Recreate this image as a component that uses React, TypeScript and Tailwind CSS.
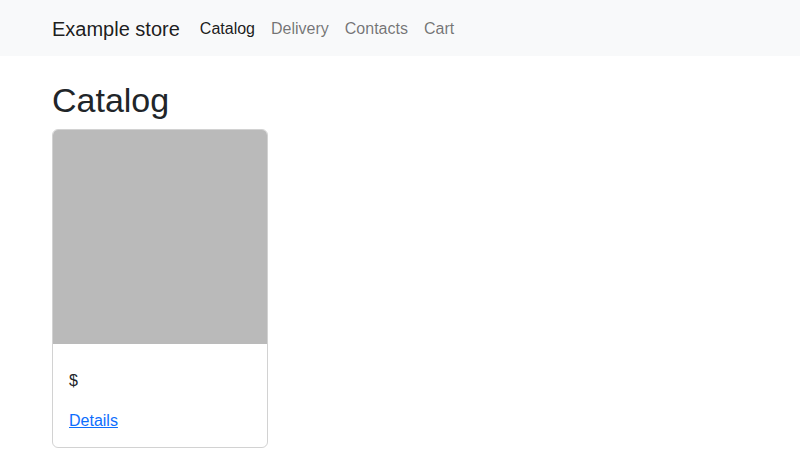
const navLinks = [
  { label: "Catalog", active: true },
  { label: "Delivery", active: false },
  { label: "Contacts", active: false },
  { label: "Cart", active: false },
];

export default function App() {
  return (
    <div className="min-h-screen bg-white font-['Liberation_Sans',Arial,sans-serif] text-[#212529]">
      <nav className="h-14 bg-[#f8f9fa]">
        <div className="mx-auto flex h-full w-[720px] items-center px-3 pt-[2px]">
          <a href="#" className="mr-3 text-[20px] leading-[30px] text-black/90">
            Example store
          </a>
          <ul className="flex">
            {navLinks.map((link) => (
              <li key={link.label}>
                <a
                  href="#"
                  className={
                    link.active
                      ? "block px-2 text-base leading-6 text-black/90"
                      : "block px-2 text-base leading-6 text-black/55"
                  }
                >
                  {link.label}
                </a>
              </li>
            ))}
          </ul>
        </div>
      </nav>

      <main className="mx-auto w-[720px] px-3 pt-6">
        <h1 className="mb-2 text-[34px] font-medium leading-[1.2]">Catalog</h1>
        <div className="w-[216px] overflow-hidden rounded-[6px] border border-black/[0.175]">
          <div className="h-[214px] bg-[#bababa]" />
          <div className="px-4 pt-[25px] pb-[14px]">
            <p className="mb-4 text-base leading-6">$</p>
            <a href="#" className="text-base leading-6 text-[#0d6efd] underline">
              Details
            </a>
          </div>
        </div>
      </main>
    </div>
  );
}
